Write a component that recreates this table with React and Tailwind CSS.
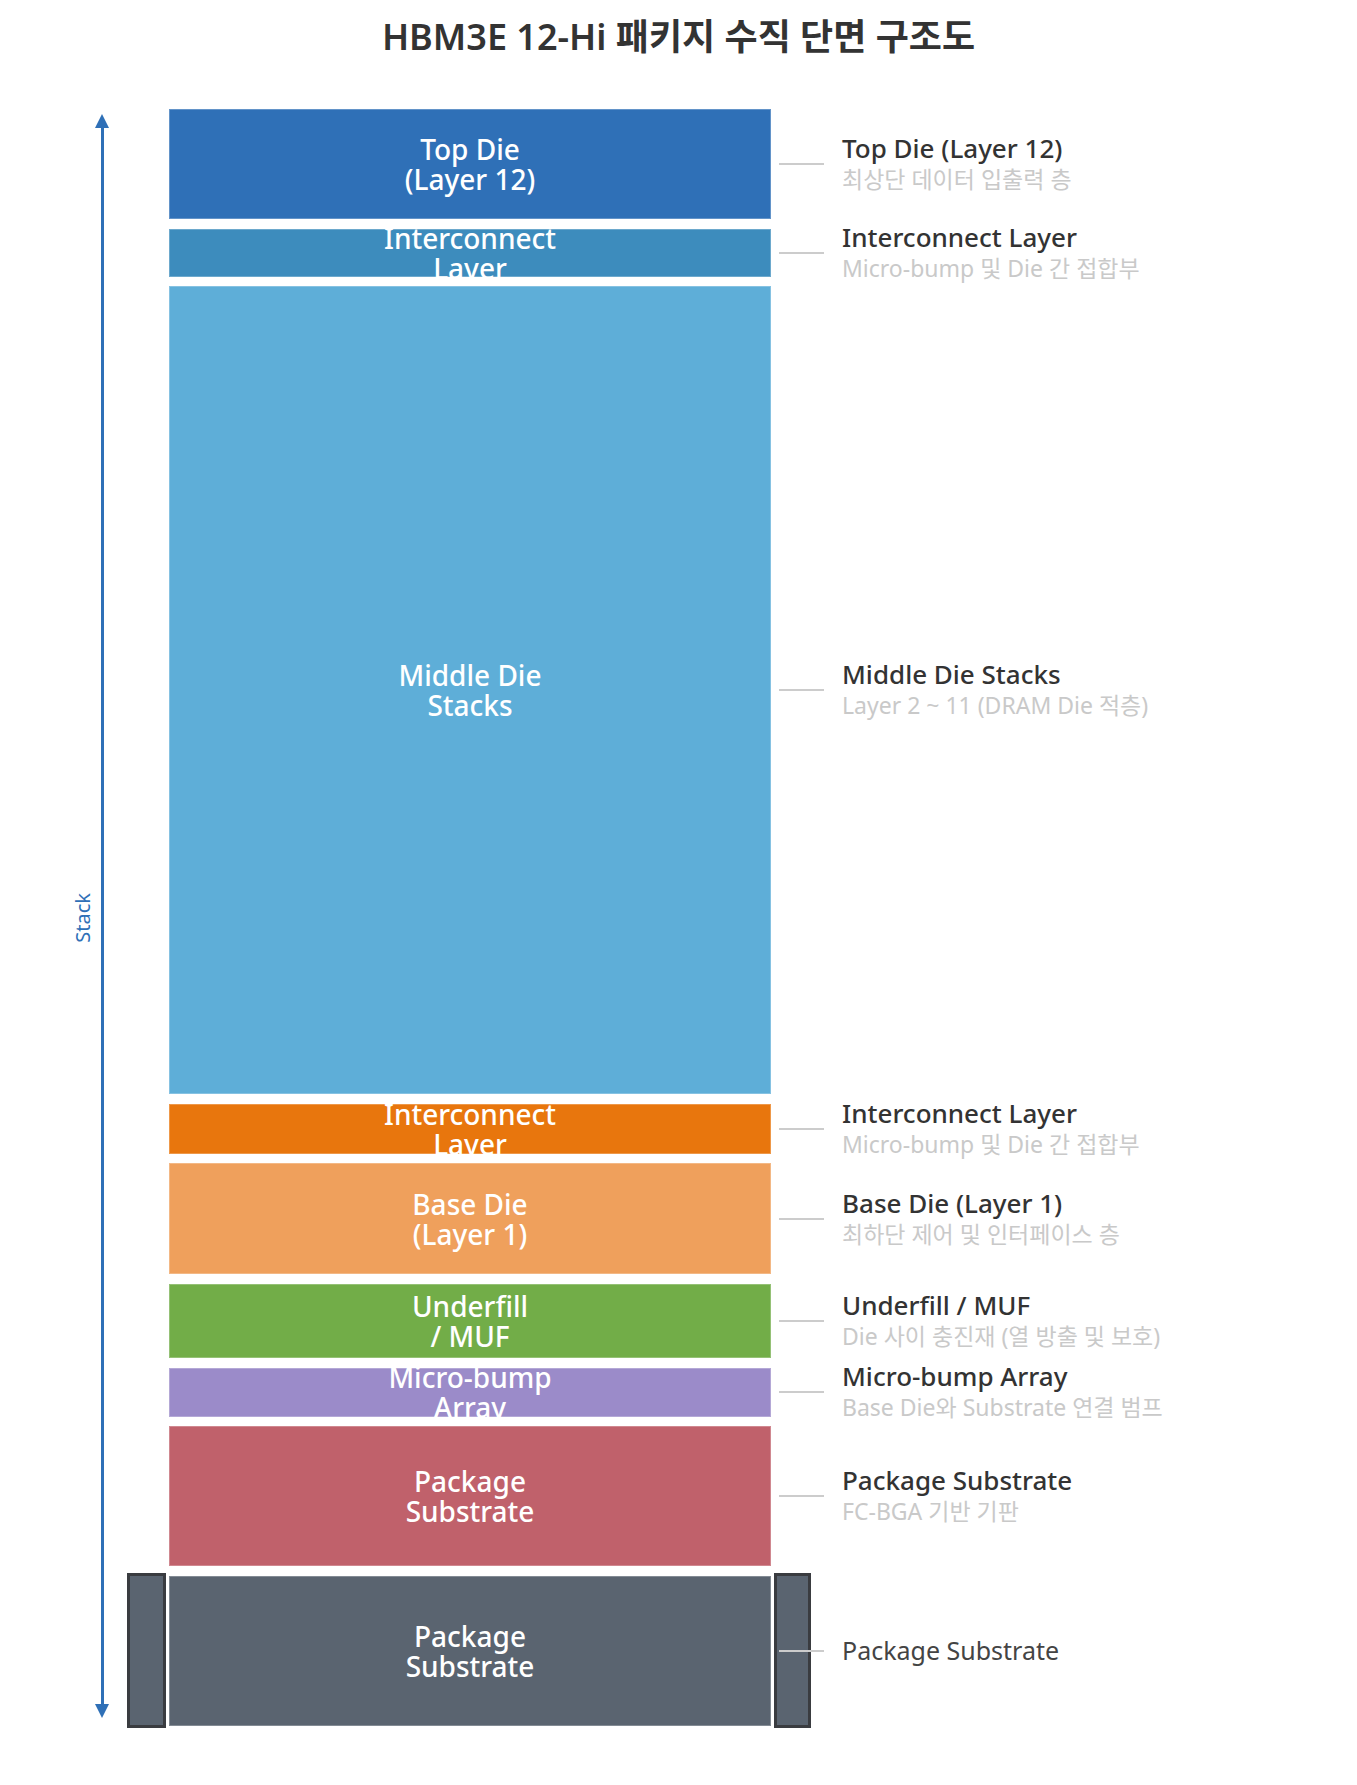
import React from 'react';

const layers = [
  { h: 'h-[110px]', bg: 'bg-[#2f70b7]', lines: ['Top Die', '(Layer 12)'], title: 'Top Die (Layer 12)', sub: '최상단 데이터 입출력 층' },
  { h: 'h-[48px]', bg: 'bg-[#3d8cbd]', lines: ['Interconnect', 'Layer'], title: 'Interconnect Layer', sub: 'Micro-bump 및 Die 간 접합부' },
  { h: 'h-[808px]', bg: 'bg-[#5eaed8]', lines: ['Middle Die', 'Stacks'], title: 'Middle Die Stacks', sub: 'Layer 2 ~ 11 (DRAM Die 적층)' },
  { h: 'h-[50px]', bg: 'bg-[#e8760d]', lines: ['Interconnect', 'Layer'], title: 'Interconnect Layer', sub: 'Micro-bump 및 Die 간 접합부' },
  { h: 'h-[111px]', bg: 'bg-[#efa05c]', lines: ['Base Die', '(Layer 1)'], title: 'Base Die (Layer 1)', sub: '최하단 제어 및 인터페이스 층' },
  { h: 'h-[74px]', bg: 'bg-[#72ad48]', lines: ['Underfill', '/ MUF'], title: 'Underfill / MUF', sub: 'Die 사이 충진재 (열 방출 및 보호)' },
  { h: 'h-[49px]', bg: 'bg-[#9b8bc9]', lines: ['Micro-bump', 'Array'], title: 'Micro-bump Array', sub: 'Base Die와 Substrate 연결 범프' },
  { h: 'h-[140px]', bg: 'bg-[#c0616b]', lines: ['Package', 'Substrate'], title: 'Package Substrate', sub: 'FC-BGA 기반 기판' },
  { h: 'h-[150px]', bg: 'bg-[#5a6470]', lines: ['Package', 'Substrate'], title: 'Package Substrate', base: true },
];

// side clamp around the package base, slightly taller than the row
const Bracket = ({ className }) => (
  <div className={`-my-[2.5px] h-[155px] shrink-0 border-[3px] border-[#3a3c40] bg-[#5a6470] ${className}`} />
);

const LayerRow = ({ layer }) => (
  <div className={`flex items-center ${layer.h}`}>
    <div className="flex h-full w-[42px] shrink-0 items-center">
      {layer.base && <Bracket className="w-[39px]" />}
    </div>

    <div className={`flex h-full w-[602px] shrink-0 flex-col items-center justify-center border border-white/25 text-[28px] font-medium leading-[30px] text-white ${layer.bg}`}>
      {layer.lines.map((l) => (
        <span key={l} className="whitespace-nowrap">{l}</span>
      ))}
    </div>

    <div className="grid h-full w-[71px] shrink-0 grid-rows-1 items-center">
      {layer.base && <Bracket className="col-start-1 row-start-1 ml-[3px] w-[37px]" />}
      <div className="col-start-1 row-start-1 ml-[8px] h-[2px] w-[45px] bg-[#cccccc]" />
    </div>

    <div className="flex h-full flex-col justify-center whitespace-nowrap">
      {layer.base ? (
        <span className="text-[25px] leading-[31px] text-[#444]">{layer.title}</span>
      ) : (
        <>
          <span className="text-[26px] font-medium leading-[31px] text-[#333]">{layer.title}</span>
          <span className="text-[23px] leading-[31px] text-[#c9c9c9]">{layer.sub}</span>
        </>
      )}
    </div>
  </div>
);

export default function App() {
  return (
    <div className="min-h-[1785px] w-[1357px] bg-white font-['Noto_Sans','Noto_Sans_CJK_KR',sans-serif]">
      <h1 className="pt-[13px] text-center text-[36px] font-semibold leading-[48px] text-[#333]">
        HBM3E 12-Hi 패키지 수직 단면 구조도
      </h1>

      <div className="mt-[48px] flex pl-[72px]">
        <div className="flex w-[22px] shrink-0 items-center justify-center">
          <span className="rotate-180 text-[20px] leading-[22px] text-[#2f70b7] [writing-mode:vertical-rl]">Stack</span>
        </div>

        <div className="ml-[1px] mr-[18px] flex w-[14px] shrink-0 flex-col items-center pb-[8px] pt-[5px]">
          <svg width="14" height="14" viewBox="0 0 14 14" className="shrink-0">
            <path d="M7 0 L14 14 L0 14 Z" fill="#2f70b7" />
          </svg>
          <div className="w-[3px] flex-1 bg-[#2f70b7]" />
          <svg width="14" height="14" viewBox="0 0 14 14" className="shrink-0">
            <path d="M0 0 L14 0 L7 14 Z" fill="#2f70b7" />
          </svg>
        </div>

        <div className="flex flex-col gap-[9.6px]">
          {layers.map((layer, i) => (
            <LayerRow key={i} layer={layer} />
          ))}
        </div>
      </div>
    </div>
  );
}
